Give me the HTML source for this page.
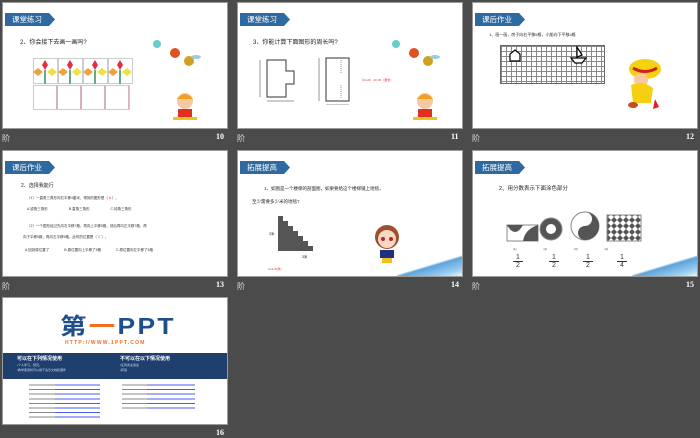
<!DOCTYPE html>
<html><head><meta charset="utf-8"><style>
*{margin:0;padding:0;box-sizing:border-box}
body{width:700px;height:438px;background:#4b4b4b;position:relative;overflow:hidden;font-family:"Liberation Sans","Noto Sans CJK SC",sans-serif}
.s{position:absolute;width:226px;height:127px;background:#fff;border:1px solid #9a9a9a;overflow:hidden}
.a{position:absolute}
.tag{position:absolute;left:2px;top:10px;height:13px;width:50px;background:#2e6aa0;color:#fff;font-size:7.5px;line-height:13px;padding-left:7px;clip-path:polygon(0 0,88% 0,100% 50%,88% 100%,0 100%)}
.t{font-size:6px;color:#222;white-space:nowrap}
.lb{position:absolute;font-size:8px;color:#ddd}
.nm{position:absolute;font-size:8px;color:#fff;font-weight:bold;font-family:"Liberation Serif",serif}
.frac{position:absolute;font-size:7px;text-align:center;width:10px;line-height:7px;color:#333}
.frac b{display:block;border-top:1px solid #333;font-weight:normal}
.blue{position:absolute;right:-10px;bottom:-6px;width:70px;height:30px;background:linear-gradient(160deg,transparent 40%,#4a9ad8 45%,#8fc8ee 70%,#fff 90%);transform:skewX(-30deg);opacity:.9}
</style></head><body>

<!-- slide 10 -->
<div class="s" style="left:2px;top:2px">
<div class="tag">课堂练习</div>
<div class="a t" style="left:17px;top:34px">2、你会接下去画一画吗?</div>
<div class="a" style="left:30px;top:55px;width:100px;height:26px;border:1px solid #ccc;background:repeating-linear-gradient(90deg,#fff 0 23px,#ccc 23px 25px)"></div>
<svg class="a" style="left:30px;top:55px" width="100" height="26"><g>
<polygon points="12,2 15,7 12,12 9,7" fill="#e03040"/><polygon points="5,10 10,14 5,18 0,14" fill="#f0a040"/><polygon points="19,10 24,14 19,18 14,14" fill="#f0e040"/><rect x="11" y="12" width="2" height="14" fill="#6a8"/>
<polygon points="37,2 40,7 37,12 34,7" fill="#e03040"/><polygon points="30,10 35,14 30,18 25,14" fill="#f0a040"/><polygon points="44,10 49,14 44,18 39,14" fill="#f0e040"/><rect x="36" y="12" width="2" height="14" fill="#6a8"/>
<polygon points="62,2 65,7 62,12 59,7" fill="#e03040"/><polygon points="55,10 60,14 55,18 50,14" fill="#f0a040"/><polygon points="69,10 74,14 69,18 64,14" fill="#f0e040"/><rect x="61" y="12" width="2" height="14" fill="#6a8"/>
<polygon points="87,2 90,7 87,12 84,7" fill="#e03040"/><polygon points="80,10 85,14 80,18 75,14" fill="#f0a040"/><polygon points="94,10 99,14 94,18 89,14" fill="#f0e040"/><rect x="86" y="12" width="2" height="14" fill="#6a8"/></g></svg>
<div class="a" style="left:30px;top:82px;width:97px;height:25px;border:1px solid #ccc;background:repeating-linear-gradient(90deg,#fff 0 22px,#d9b0c0 22px 24px)"></div>
<svg class="a" style="left:146px;top:33px" width="55" height="40"><circle cx="8" cy="8" r="4" fill="#6cc"/><circle cx="26" cy="17" r="5" fill="#e05020"/><circle cx="40" cy="25" r="5" fill="#d0a020"/><ellipse cx="47" cy="21" rx="5" ry="2" fill="#9cd"/></svg>
<svg class="a" style="left:167px;top:86px" width="30" height="34"><circle cx="15" cy="12" r="8" fill="#f7c9a0"/><path d="M7 10 Q15 0 23 10 Z" fill="#f0a020"/><rect x="8" y="20" width="14" height="8" fill="#e03020"/><rect x="3" y="28" width="24" height="3" fill="#f0c020"/></svg>
</div>
<div class="lb" style="left:2px;top:133px">阶</div><div class="nm" style="left:216px;top:132px">10</div>

<!-- slide 11 -->
<div class="s" style="left:237px;top:2px">
<div class="tag">课堂练习</div>
<div class="a t" style="left:15px;top:34px">3、你能计算下面图形的周长吗?</div>
<svg class="a" style="left:10px;top:52px" width="110" height="50" fill="none" stroke="#333" stroke-width="1">
<path d="M19 5 H38 V16 H46 V29 H38 V42 H19 Z"/><path d="M12 5 V42 M19 46 H46" stroke-width=".5"/>
<path d="M78 3 H101 V46 H78 Z"/><path d="M71 3 V46 M78 50 H101" stroke-width=".5"/><path d="M93 5 V18 M93 30 V44" stroke-dasharray="1 1" stroke-width=".5"/></svg>
<div class="a" style="left:122px;top:75px;font-size:3px;color:#e03030">（10+8）×2=36（厘米）</div>
<svg class="a" style="left:150px;top:33px" width="55" height="40"><circle cx="8" cy="8" r="4" fill="#6cc"/><circle cx="26" cy="17" r="5" fill="#e05020"/><circle cx="40" cy="25" r="5" fill="#d0a020"/><ellipse cx="47" cy="21" rx="5" ry="2" fill="#9cd"/></svg>
<svg class="a" style="left:172px;top:86px" width="30" height="34"><circle cx="15" cy="12" r="8" fill="#f7c9a0"/><path d="M7 10 Q15 0 23 10 Z" fill="#f0a020"/><rect x="8" y="20" width="14" height="8" fill="#e03020"/><rect x="3" y="28" width="24" height="3" fill="#f0c020"/></svg>
</div>
<div class="lb" style="left:237px;top:133px">阶</div><div class="nm" style="left:451px;top:132px">11</div>

<!-- slide 12 -->
<div class="s" style="left:472px;top:2px">
<div class="tag">课后作业</div>
<div class="a" style="left:16px;top:29px;font-size:4px;color:#222">1、画一画，房子向右平移5格，小船向下平移4格</div>
<div class="a" style="left:27px;top:42px;width:105px;height:39px;border:1px solid #666;background-image:linear-gradient(#888 1px,transparent 1px),linear-gradient(90deg,#888 1px,transparent 1px);background-size:5px 5px"></div>
<svg class="a" style="left:27px;top:42px" width="105" height="39" fill="#fff" stroke="#000" stroke-width="1.2"><path d="M10 16 V9 L15 5 L20 9 V16 Z"/><path d="M77 2 V12 L82 10 Z M71 13 H86 L82 18 H75 Z"/></svg>
<svg class="a" style="left:150px;top:52px" width="45" height="58"><ellipse cx="22" cy="14" rx="16" ry="10" fill="#f5d010"/><path d="M10 13 Q22 20 34 13" stroke="#d02020" stroke-width="3" fill="none"/><circle cx="18" cy="25" r="7" fill="#f7c9a0"/><path d="M8 30 Q20 25 30 33 L28 48 L10 48 Z" fill="#f5d010"/><ellipse cx="10" cy="50" rx="5" ry="3" fill="#c05020"/><path d="M32 44 L36 52 L30 54" fill="#e02020"/></svg>
</div>
<div class="lb" style="left:472px;top:133px">阶</div><div class="nm" style="left:686px;top:132px">12</div>

<!-- slide 13 -->
<div class="s" style="left:2px;top:150px">
<div class="tag">课后作业</div>
<div class="a" style="left:18px;top:31px;font-size:5px;color:#222">2、选择我能行</div>
<div class="a" style="left:24px;top:45px;font-size:3.5px;color:#333">（1）一直角三角形向右平移4厘米，得到的图形是（ <span style="color:#e03030">A</span> ）。</div>
<div class="a" style="left:24px;top:56px;font-size:3.5px;color:#333;word-spacing:20px">A.锐角三角形 B.直角三角形 C.钝角三角形</div>
<div class="a" style="left:24px;top:73px;font-size:3.5px;color:#333">（2）一个图形经过先向右平移7格，再向上平移5格，然后再向左平移7格，再</div>
<div class="a" style="left:20px;top:84px;font-size:3.5px;color:#333">向下平移5格，再向左平移5格，此时的位置是（ <span style="color:#e03030">C</span> ）。</div>
<div class="a" style="left:22px;top:97px;font-size:3.5px;color:#333;word-spacing:14px">A.回到原位置了 B.原位置向上平移了5格 C.原位置向左平移了5格</div>
</div>
<div class="lb" style="left:2px;top:281px">阶</div><div class="nm" style="left:216px;top:280px">13</div>

<!-- slide 14 -->
<div class="s" style="left:237px;top:150px">
<div class="tag">拓展提高</div>
<div class="a" style="left:26px;top:35px;font-size:4.5px;color:#222">1、如图是一个楼梯的剖面图，如果要给这个楼梯铺上地毯，</div>
<div class="a" style="left:14px;top:48px;font-size:4.5px;color:#222">至少需要多少米的地毯?</div>
<svg class="a" style="left:30px;top:64px" width="60" height="45"><path d="M10 1 H15 V6 H20 V11 H25 V16 H30 V21 H35 V26 H40 V31 H45 V36 H10 Z" fill="#555"/><text x="1" y="20" font-size="3.5" fill="#222">3米</text><text x="34" y="43" font-size="3.5" fill="#222">3米</text></svg>
<div class="a" style="left:30px;top:116px;font-size:3px;color:#e03030">3+3=6(米)</div>
<svg class="a" style="left:133px;top:72px" width="32" height="44"><circle cx="16" cy="14" r="12" fill="#a05030"/><circle cx="16" cy="16" r="9" fill="#f7d8c0"/><circle cx="12" cy="16" r="2" fill="#c02030"/><circle cx="20" cy="16" r="2" fill="#c02030"/><rect x="9" y="27" width="14" height="8" fill="#203080"/><rect x="11" y="35" width="10" height="5" fill="#f0c020"/></svg>
<div class="blue"></div>
</div>
<div class="lb" style="left:237px;top:281px">阶</div><div class="nm" style="left:451px;top:280px">14</div>

<!-- slide 15 -->
<div class="s" style="left:472px;top:150px">
<div class="tag">拓展提高</div>
<div class="a" style="left:26px;top:33px;font-size:5.5px;color:#222">2、用分数表示下面涂色部分</div>
<svg class="a" style="left:30px;top:60px" width="140" height="34">
<defs><pattern id="dm" width="6" height="6" patternUnits="userSpaceOnUse"><rect width="6" height="6" fill="#fff"/><polygon points="3,0 6,3 3,6 0,3" fill="#555"/></pattern></defs>
<rect x="4" y="14" width="31" height="16" fill="#fff" stroke="#888"/><path d="M4 14 Q12 28 20 14 M20 30 Q22 18 35 14 V30 Z" fill="#555"/>
<circle cx="48" cy="18" r="11" fill="#555" stroke="#888"/><circle cx="48" cy="18" r="5" fill="#fff"/>
<circle cx="82" cy="15" r="14" fill="#fff" stroke="#888"/><path d="M82 1 A14 14 0 0 1 82 29 A7 7 0 0 1 82 15 A7 7 0 0 0 82 1" fill="#555"/>
<rect x="104" y="4" width="34" height="26" fill="url(#dm)" stroke="#888"/></svg>
<div class="a" style="left:40px;top:96px;font-size:3px;color:#444;word-spacing:26px">(1) (2) (3) (4)</div>
<div class="frac" style="left:40px;top:103px">1<b>2</b></div>
<div class="frac" style="left:76px;top:103px">1<b>2</b></div>
<div class="frac" style="left:110px;top:103px">1<b>2</b></div>
<div class="frac" style="left:144px;top:103px">1<b>4</b></div>
<div class="blue"></div>
</div>
<div class="lb" style="left:472px;top:281px">阶</div><div class="nm" style="left:686px;top:280px">15</div>

<!-- slide 16 -->
<div class="s" style="left:2px;top:297px;height:128px">
<div class="a" style="left:57px;top:17px;font-size:23px;font-weight:bold;color:#1f4e8c;letter-spacing:2px;line-height:23px;transform:scaleX(1.15);transform-origin:left">第<span style="color:#f07020">一</span>PPT</div>
<div class="a" style="left:62px;top:42px;font-size:5px;font-weight:bold;color:#f07020;letter-spacing:1.2px">HTTP://WWW.1PPT.COM</div>
<div class="a" style="left:0;top:55px;width:226px;height:26px;background:#1f3f6e"></div>
<div class="a" style="left:14px;top:57px;font-size:5px;color:#fff;font-weight:bold">可以在下列情况使用</div>
<div class="a" style="left:117px;top:57px;font-size:5px;color:#fff;font-weight:bold">不可以在以下情况使用</div>
<div class="a" style="left:14px;top:65px;font-size:3px;color:#cde;line-height:5px">•个人学习、研究。<br>•教学使用时可以用于演示文档和课件</div>
<div class="a" style="left:117px;top:65px;font-size:3px;color:#cde;line-height:5px">•任何商业用途<br>•转载</div>
<div class="a" style="left:26px;top:85px;width:26px;height:38px;background:repeating-linear-gradient(#fff 0 1.5px,#888 1.5px 2.5px,#fff 2.5px 4.6px)"></div>
<div class="a" style="left:52px;top:85px;width:45px;height:38px;background:repeating-linear-gradient(#fff 0 1.5px,#4a5cf0 1.5px 2.5px,#fff 2.5px 4.6px)"></div>
<div class="a" style="left:119px;top:85px;width:25px;height:28px;background:repeating-linear-gradient(#fff 0 1.5px,#888 1.5px 2.5px,#fff 2.5px 4.6px)"></div>
<div class="a" style="left:144px;top:85px;width:48px;height:28px;background:repeating-linear-gradient(#fff 0 1.5px,#4a5cf0 1.5px 2.5px,#fff 2.5px 4.6px)"></div>
</div>
<div class="nm" style="left:216px;top:428px">16</div>
</body></html>
